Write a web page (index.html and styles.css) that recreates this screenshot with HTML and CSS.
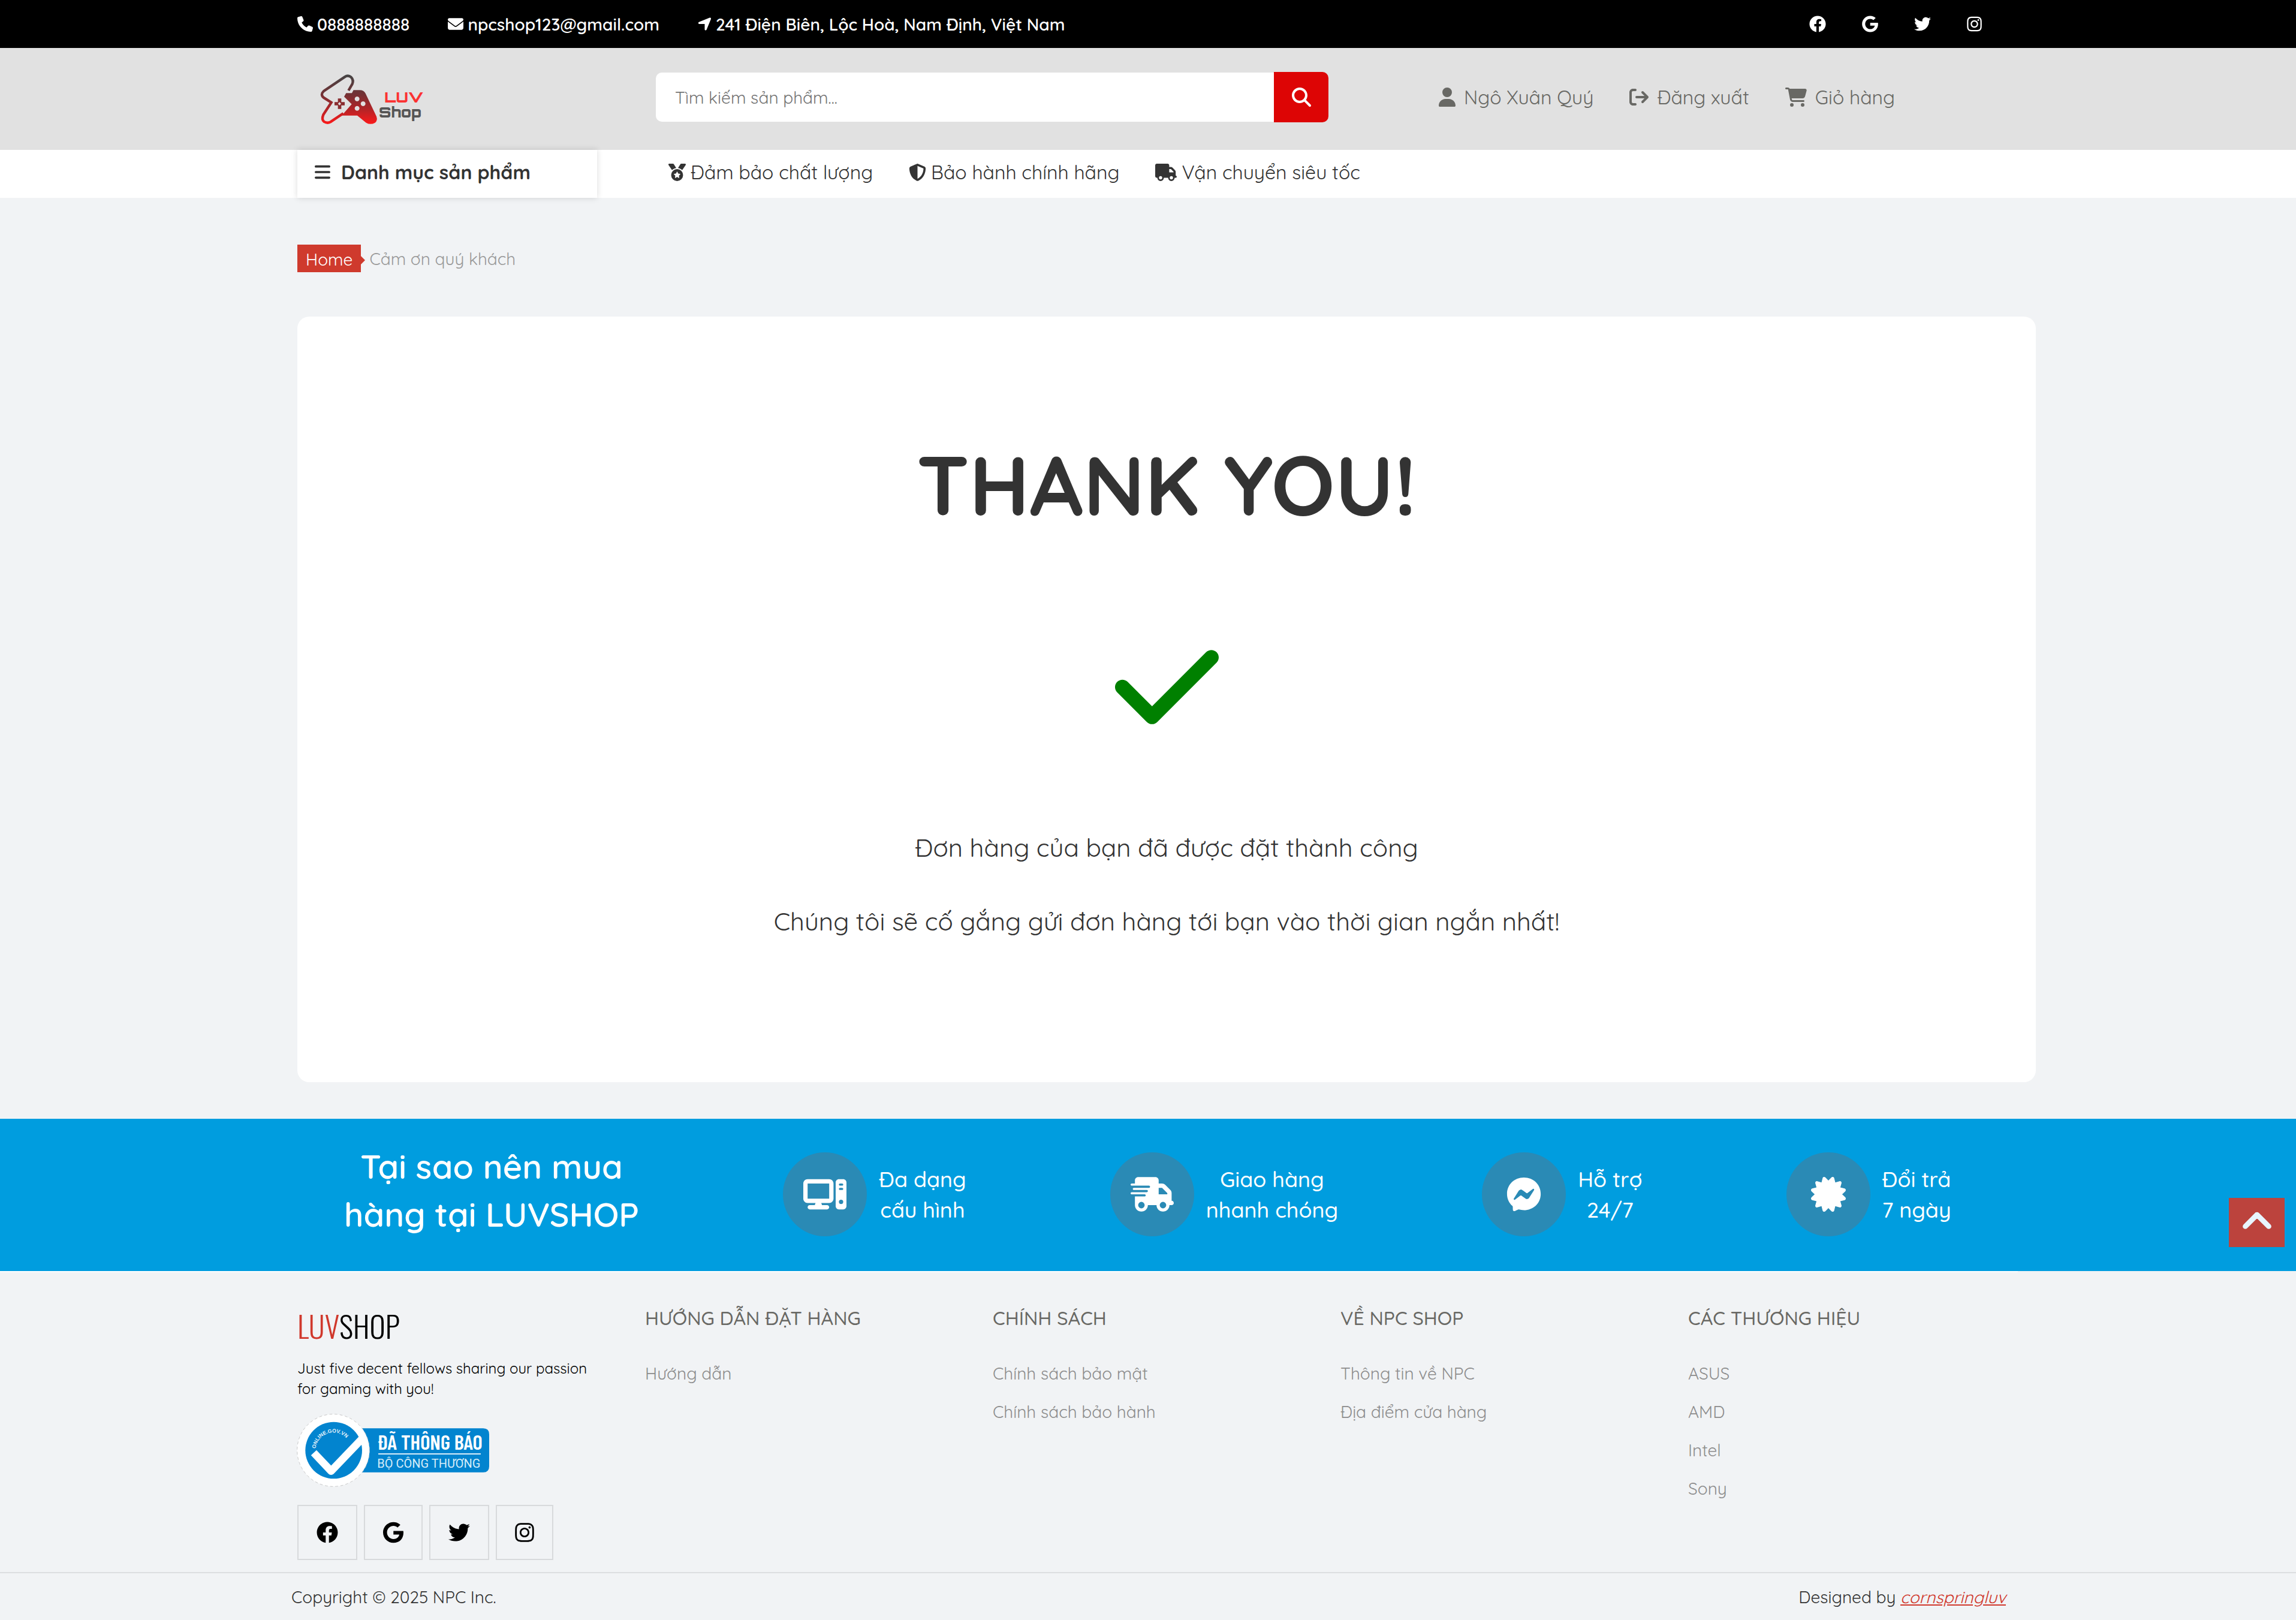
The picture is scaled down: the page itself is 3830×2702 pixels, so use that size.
FILE: index.html
```html
<!DOCTYPE html>
<html lang="vi">
<head>
<meta charset="utf-8">
<meta name="viewport" content="width=device-width, initial-scale=1">
<title>LUVSHOP - Cảm ơn quý khách</title>
<link rel="stylesheet" href="styles.css">
</head>
<body>
<svg class="sprite" aria-hidden="true">
  <symbol id="i-facebook" viewBox="0 0 512 512"><path d="M504 256C504 119 393 8 256 8S8 119 8 256c0 123.78 90.69 226.38 209.25 245V327.69h-63V256h63v-54.64c0-62.15 37-96.48 93.67-96.48 27.14 0 55.52 4.84 55.52 4.84v61h-31.28c-30.8 0-40.41 19.12-40.41 38.73V256h68.78l-11 71.69h-57.78V501C413.31 482.38 504 379.78 504 256z"/></symbol>
  <symbol id="i-google" viewBox="0 0 488 512"><path d="M488 261.8C488 403.3 391.1 504 248 504 110.8 504 0 393.2 0 256S110.8 8 248 8c66.8 0 123 24.5 166.3 64.9l-67.5 64.9C258.5 52.6 94.3 116.6 94.3 256c0 86.5 69.1 156.6 153.7 156.6 98.2 0 135-70.4 140.8-106.9H248v-85.3h236.1c2.3 12.7 3.9 24.9 3.9 41.4z"/></symbol>
  <symbol id="i-twitter" viewBox="0 0 512 512"><path d="M459.37 151.716c.325 4.548.325 9.097.325 13.645 0 138.72-105.583 298.558-298.558 298.558-59.452 0-114.68-17.219-161.137-47.106 8.447.974 16.568 1.299 25.34 1.299 49.055 0 94.213-16.568 130.274-44.832-46.132-.975-84.792-31.188-98.112-72.772 6.498.974 12.995 1.624 19.818 1.624 9.421 0 18.843-1.3 27.614-3.573-48.081-9.747-84.143-51.98-84.143-102.985v-1.299c13.969 7.797 30.214 12.67 47.431 13.319-28.264-18.843-46.781-51.005-46.781-87.391 0-19.492 5.197-37.36 14.294-52.954 51.655 63.675 129.3 105.258 216.365 109.807-1.624-7.797-2.599-15.918-2.599-24.04 0-57.828 46.782-104.934 104.934-104.934 30.213 0 57.502 12.67 76.67 33.137 23.715-4.548 46.456-13.32 66.599-25.34-7.798 24.366-24.366 44.833-46.132 57.827 21.117-2.273 41.584-8.122 60.426-16.243-14.292 20.791-32.161 39.308-52.628 54.253z"/></symbol>
  <symbol id="i-instagram" viewBox="0 0 448 512"><path d="M224.1 141c-63.6 0-114.9 51.3-114.9 114.9s51.3 114.9 114.9 114.9S339 319.5 339 255.9 287.7 141 224.1 141zm0 189.6c-41.1 0-74.7-33.5-74.7-74.7s33.5-74.7 74.7-74.7 74.7 33.5 74.7 74.7-33.6 74.7-74.7 74.7zm146.4-194.3c0 14.9-12 26.8-26.8 26.8-14.9 0-26.8-12-26.8-26.8s12-26.8 26.8-26.8 26.8 12 26.8 26.8zm76.1 27.2c-1.7-35.9-9.9-67.7-36.2-93.9-26.2-26.2-58-34.4-93.9-36.2-37-2.1-147.9-2.1-184.9 0-35.8 1.7-67.6 9.9-93.9 36.1s-34.4 58-36.2 93.9c-2.1 37-2.1 147.9 0 184.9 1.7 35.9 9.9 67.7 36.2 93.9s58 34.4 93.9 36.2c37 2.1 147.9 2.1 184.9 0 35.9-1.7 67.7-9.9 93.9-36.2 26.2-26.2 34.4-58 36.2-93.9 2.1-37 2.1-147.8 0-184.8zM398.8 388c-7.8 19.6-22.9 34.7-42.6 42.6-29.5 11.7-99.5 9-132.1 9s-102.7 2.6-132.1-9c-19.6-7.8-34.7-22.9-42.6-42.6-11.7-29.5-9-99.5-9-132.1s-2.6-102.7 9-132.1c7.8-19.6 22.9-34.7 42.6-42.6 29.5-11.7 99.5-9 132.1-9s102.7-2.6 132.1 9c19.6 7.8 34.7 22.9 42.6 42.6 11.7 29.5 9 99.5 9 132.1s2.7 102.7-9 132.1z"/></symbol>
</svg>

<div class="topbar">
  <div class="container topbar-row">
    <ul class="contacts">
      <li><svg class="icon w26" viewBox="0 0 512 512"><path d="M164.9 24.6c-7.7-18.6-28-28.5-47.4-23.2l-88 24C12.1 30.2 0 46 0 64C0 311.4 200.6 512 448 512c18 0 33.8-12.1 38.6-29.5l24-88c5.3-19.4-4.6-39.7-23.2-47.4l-96-40c-16.3-6.8-35.2-2.1-46.3 11.6L304.7 368C234.3 334.7 177.3 277.7 144 207.3L193.3 167c13.7-11.2 18.4-30 11.6-46.3l-40-96z"/></svg>0888888888</li>
      <li><svg class="icon w26" viewBox="0 0 512 512"><path d="M48 64C21.5 64 0 85.5 0 112c0 15.1 7.1 29.3 19.2 38.4L236.8 313.6c11.4 8.5 27 8.5 38.4 0L492.8 150.4c12.1-9.1 19.2-23.3 19.2-38.4c0-26.5-21.5-48-48-48H48zM0 176V384c0 35.3 28.7 64 64 64H448c35.3 0 64-28.7 64-64V176L294.4 339.2c-22.8 17.1-54 17.1-76.8 0L0 176z"/></svg>npcshop123@gmail.com</li>
      <li><svg class="icon w23" viewBox="0 0 448 512"><path d="M429.6 92.1c4.9-11.9 2.1-25.6-7-34.7s-22.8-11.9-34.7-7l-352 144c-14.2 5.8-22.2 20.8-19.3 35.8s16.1 25.8 31.4 25.8H224V432c0 15.3 10.8 28.4 25.8 31.4s30-5.1 35.8-19.3l144-352z"/></svg>241 Điện Biên, Lộc Hoà, Nam Định, Việt Nam</li>
    </ul>
    <div class="topbar-social">
      <a href="#" aria-label="Facebook"><svg class="icon w28"><use href="#i-facebook"/></svg></a>
      <a href="#" aria-label="Google"><svg class="icon w27"><use href="#i-google"/></svg></a>
      <a href="#" aria-label="Twitter"><svg class="icon w28"><use href="#i-twitter"/></svg></a>
      <a href="#" aria-label="Instagram"><svg class="icon w25"><use href="#i-instagram"/></svg></a>
    </div>
  </div>
</div>

<header class="header">
  <div class="container header-row">
    <a class="logo" href="#" aria-label="LUV Shop">
      <svg viewBox="0 -9 630 330" width="210" height="110">
        <defs><linearGradient id="pad" gradientUnits="userSpaceOnUse" x1="0" y1="45" x2="0" y2="290"><stop offset="0" stop-color="#444"/><stop offset=".4" stop-color="#743134"/><stop offset=".7" stop-color="#b32427"/><stop offset="1" stop-color="#fb1a1a"/></linearGradient></defs>
        <path d="M184 123L203 90Q211 70 197 56Q182 44 165 55L60 126Q42 143 59 158L98 183L58 244Q48 268 62 279Q78 289 94 280L158 237" fill="none" stroke="url(#pad)" stroke-width="13"/>
        <path fill="url(#pad)" fill-rule="evenodd" d="M172 136H201L209 121H240Q260 121 269 137L324 253Q331 274 317 284Q294 297 272 284L228 248H150L200 191L162 154ZM227 153a12 12 0 1 0 .1 0zM257 177a12 12 0 1 0 .1 0zM227 200a12 12 0 1 0 .1 0z"/>
        <path fill="#8a2c2f" fill-rule="evenodd" d="M131 163h17v18h17v16h-17v18h-17v-18h-17v-16h17zM139 181l-8 8 8 8 8-8z"/>
        <text class="logo-luv" x="364" y="184">LUV</text>
        <text class="logo-shop" x="336" y="257">Shop</text>
      </svg>
    </a>
    <form class="search" role="search" onsubmit="return false">
      <input class="search-input" type="search" placeholder="Tìm kiếm sản phẩm..." aria-label="Tìm kiếm sản phẩm">
      <button class="search-btn" type="submit" aria-label="Tìm kiếm"><svg class="icon w32" viewBox="0 0 512 512"><path d="M416 208c0 45.9-14.9 88.3-40 122.7L502.6 457.4c12.5 12.5 12.5 32.8 0 45.3s-32.8 12.5-45.3 0L330.7 376c-34.4 25.2-76.8 40-122.7 40C93.1 416 0 322.9 0 208S93.1 0 208 0S416 93.1 416 208zM208 352a144 144 0 1 0 0-288 144 144 0 1 0 0 288z"/></svg></button>
    </form>
    <nav class="account">
      <a href="#"><svg class="icon w28 h32" viewBox="0 0 448 512"><path d="M224 256A128 128 0 1 0 224 0a128 128 0 1 0 0 256zm-45.7 48C79.8 304 0 383.8 0 482.3C0 498.7 13.3 512 29.7 512H418.3c16.4 0 29.7-13.3 29.7-29.7C448 383.8 368.2 304 269.7 304H178.3z"/></svg>Ngô Xuân Quý</a>
      <a href="#"><svg class="icon w32" viewBox="0 0 512 512"><path d="M502.6 278.6c12.5-12.5 12.5-32.8 0-45.3l-128-128c-12.5-12.5-32.8-12.5-45.3 0s-12.5 32.8 0 45.3L402.7 224 192 224c-17.7 0-32 14.3-32 32s14.3 32 32 32l210.7 0-73.4 73.4c-12.5 12.5-12.5 32.8 0 45.3s32.8 12.5 45.3 0l128-128zM160 96c17.7 0 32-14.3 32-32s-14.3-32-32-32L96 32C43 32 0 75 0 128L0 384c0 53 43 96 96 96l64 0c17.7 0 32-14.3 32-32s-14.3-32-32-32l-64 0c-17.7 0-32-14.3-32-32l0-256c0-17.7 14.3-32 32-32l64 0z"/></svg>Đăng xuất</a>
      <a href="#"><svg class="icon w36 h32" viewBox="0 0 576 512"><path d="M0 24C0 10.7 10.7 0 24 0H69.5c22 0 41.5 12.8 50.6 32h411c26.3 0 45.5 25 38.6 50.4l-41 152.3c-8.5 31.4-37 53.3-69.5 53.3H170.7l5.4 28.5c2.2 11.3 12.1 19.5 23.6 19.5H488c13.3 0 24 10.7 24 24s-10.7 24-24 24H199.7c-34.6 0-64.3-24.6-70.7-58.5L77.4 54.5c-.7-3.8-4-6.5-7.9-6.5H24C10.7 48 0 37.3 0 24zM128 464a48 48 0 1 1 96 0 48 48 0 1 1 -96 0zm336-48a48 48 0 1 1 0 96 48 48 0 1 1 0-96z"/></svg>Giỏ hàng</a>
    </nav>
  </div>
</header>

<div class="navbar">
  <div class="container navbar-row">
    <button class="categories" type="button"><svg class="icon w26 h30" viewBox="0 0 448 512"><path d="M0 96C0 78.3 14.3 64 32 64H416c17.7 0 32 14.3 32 32s-14.3 32-32 32H32C14.3 128 0 113.7 0 96zM0 256c0-17.7 14.3-32 32-32H416c17.7 0 32 14.3 32 32s-14.3 32-32 32H32c-17.7 0-32-14.3-32-32zM448 416c0 17.7-14.3 32-32 32H32c-17.7 0-32-14.3-32-32s14.3-32 32-32H416c17.7 0 32 14.3 32 32z"/></svg>Danh mục sản phẩm</button>
    <ul class="promises">
      <li><svg class="icon w29" viewBox="0 0 512 512"><path d="M4.1 38.2C1.4 34.2 0 29.4 0 24.6C0 11 11 0 24.6 0H133.9c11.2 0 21.7 5.9 27.4 15.5l68.5 114.1c-48.2 6.1-91.3 28.6-123.4 61.9L4.1 38.2zm503.7 0L405.6 191.5c-32.1-33.3-75.2-55.8-123.4-61.9L350.7 15.5C356.5 5.9 366.9 0 378.1 0H487.4C501 0 512 11 512 24.6c0 4.8-1.4 9.6-4.1 13.6zM80 336a176 176 0 1 1 352 0A176 176 0 1 1 80 336zm184.4-94.9c-3.4-7-13.3-7-16.8 0l-22.4 45.4c-1.4 2.8-4 4.7-7 5.1L168 298.9c-7.7 1.1-10.7 10.5-5.2 16l36.3 35.4c2.2 2.2 3.2 5.2 2.7 8.3l-8.6 49.9c-1.3 7.6 6.7 13.5 13.6 9.9l44.8-23.6c2.7-1.4 6-1.4 8.7 0l44.8 23.6c6.9 3.6 14.9-2.2 13.6-9.9l-8.6-49.9c-.5-3 .5-6.1 2.7-8.3l36.3-35.4c5.6-5.4 2.5-14.8-5.2-16l-50.1-7.3c-3-.4-5.7-2.4-7-5.1l-22.4-45.4z"/></svg>Đảm bảo chất lượng</li>
      <li><svg class="icon w29" viewBox="0 0 512 512"><path d="M256 0c4.6 0 9.2 1 13.4 2.9L457.7 82.8c22 9.3 38.4 31 38.3 57.2c-.5 99.2-41.3 280.7-213.6 363.2c-16.7 8-36.1 8-52.8 0C57.3 420.7 16.5 239.2 16 140c-.1-26.2 16.3-47.9 38.3-57.2L242.7 2.9C246.8 1 251.4 0 256 0zm0 66.8V444.8C394 378 431.1 230.1 432 141.4L256 66.8l0 0z"/></svg>Bảo hành chính hãng</li>
      <li><svg class="icon w36 h29" viewBox="0 0 640 512"><path d="M48 0C21.5 0 0 21.5 0 48V368c0 26.5 21.5 48 48 48H64c0 53 43 96 96 96s96-43 96-96H384c0 53 43 96 96 96s96-43 96-96h32c17.7 0 32-14.3 32-32s-14.3-32-32-32V288 256 237.3c0-17-6.7-33.3-18.7-45.3L512 114.7c-12-12-28.3-18.7-45.3-18.7H416V48c0-26.5-21.5-48-48-48H48zM416 160h50.7L544 237.3V256H416V160zM112 416a48 48 0 1 1 96 0 48 48 0 1 1 -96 0zm368-48a48 48 0 1 1 0 96 48 48 0 1 1 0-96z"/></svg>Vận chuyển siêu tốc</li>
    </ul>
  </div>
</div>

<main class="container main">
  <nav class="breadcrumb" aria-label="Breadcrumb">
    <a class="crumb-home" href="#">Home</a>
    <span>Cảm ơn quý khách</span>
  </nav>
  <section class="card">
    <h1>THANK YOU!</h1>
    <svg class="check" viewBox="0 0 448 512"><path d="M438.6 105.4c12.5 12.5 12.5 32.8 0 45.3l-256 256c-12.5 12.5-32.8 12.5-45.3 0l-128-128c-12.5-12.5-12.5-32.8 0-45.3s32.8-12.5 45.3 0L160 338.7 393.4 105.4c12.5-12.5 32.8-12.5 45.3 0z"/></svg>
    <p>Đơn hàng của bạn đã được đặt thành công</p>
    <p>Chúng tôi sẽ cố gắng gửi đơn hàng tới bạn vào thời gian ngắn nhất!</p>
  </section>
</main>

<section class="why">
  <div class="container why-row">
    <h2>Tại sao nên mua<br>hàng tại LUVSHOP</h2>
    <div class="reason">
      <span class="disc"><svg class="icon w72" viewBox="0 0 640 512"><path fill-rule="evenodd" d="M384 96V320H64L64 96H384zM64 32C28.7 32 0 60.7 0 96V320c0 35.3 28.7 64 64 64H181.3l-10.7 32H96c-17.7 0-32 14.3-32 32s14.3 32 32 32H352c17.7 0 32-14.3 32-32s-14.3-32-32-32H277.3l-10.7-32H384c35.3 0 64-28.7 64-64V96c0-35.3-28.7-64-64-64H64zm464 0c-26.5 0-48 21.5-48 48V432c0 26.5 21.5 48 48 48h64c26.5 0 48-21.5 48-48V80c0-26.5-21.5-48-48-48H528zm16 64h32c8.8 0 16 7.2 16 16s-7.2 16-16 16H544c-8.8 0-16-7.2-16-16s7.2-16 16-16zm-16 80c0-8.8 7.2-16 16-16h32c8.8 0 16 7.2 16 16s-7.2 16-16 16H544c-8.8 0-16-7.2-16-16zm32 160a32 32 0 1 1 0 64 32 32 0 1 1 0-64z"/></svg></span>
      <p>Đa dạng<br>cấu hình</p>
    </div>
    <div class="reason">
      <span class="disc"><svg class="icon w72" viewBox="0 0 640 512"><path d="M112 0C85.5 0 64 21.5 64 48V96H16c-8.8 0-16 7.2-16 16s7.2 16 16 16H64 272c8.8 0 16 7.2 16 16s-7.2 16-16 16H64 48c-8.8 0-16 7.2-16 16s7.2 16 16 16H64 240c8.8 0 16 7.2 16 16s-7.2 16-16 16H64 16c-8.8 0-16 7.2-16 16s7.2 16 16 16H64 208c8.8 0 16 7.2 16 16s-7.2 16-16 16H64V416c0 53 43 96 96 96s96-43 96-96H384c0 53 43 96 96 96s96-43 96-96h32c17.7 0 32-14.3 32-32s-14.3-32-32-32V288 256 237.3c0-17-6.7-33.3-18.7-45.3L512 114.7c-12-12-28.3-18.7-45.3-18.7H416V48c0-26.5-21.5-48-48-48H112zM544 237.3V256H416V160h50.7L544 237.3zM160 368a48 48 0 1 1 0 96 48 48 0 1 1 0-96zm272 48a48 48 0 1 1 96 0 48 48 0 1 1 -96 0z"/></svg></span>
      <p>Giao hàng<br>nhanh chóng</p>
    </div>
    <div class="reason">
      <span class="disc"><svg class="icon w58" viewBox="0 0 512 512"><path d="M256.55 8C116.52 8 8 110.34 8 248.57c0 72.3 29.71 134.78 78.07 177.94 8.35 7.51 6.63 11.86 8.05 58.23A19.92 19.92 0 0 0 122 502.31c52.91-23.3 53.59-25.14 62.56-22.7C337.85 521.8 504 423.7 504 248.57 504 110.34 396.59 8 256.55 8zm149.24 185.13l-73 115.57a37.37 37.37 0 0 1-53.91 9.93l-58.08-43.47a15 15 0 0 0-18 0l-78.37 59.44c-10.46 7.93-24.16-4.6-17.11-15.67l73-115.57a37.36 37.36 0 0 1 53.91-9.93l58.06 43.46a15 15 0 0 0 18 0l78.41-59.38c10.44-7.98 24.14 4.54 17.09 15.62z"/></svg></span>
      <p>Hỗ trợ<br>24/7</p>
    </div>
    <div class="reason">
      <span class="disc"><svg class="icon w58" viewBox="0 0 512 512"><path d="M211 7.3C205 1 196-1.4 187.6 .8s-14.9 8.9-17.1 17.3L154.7 80.6l-62-17.5c-8.4-2.4-17.4 0-23.5 6.1s-8.5 15.1-6.1 23.5l17.5 62L18.1 170.6c-8.4 2.1-15 8.7-17.3 17.1S1 205 7.3 211l46.2 45L7.3 301C1 307-1.4 316 .8 324.4s8.9 14.9 17.3 17.1l62.5 15.8-17.5 62c-2.4 8.4 0 17.4 6.1 23.5s15.1 8.5 23.5 6.1l62-17.5 15.8 62.5c2.1 8.4 8.7 15 17.1 17.3s17.3-.2 23.4-6.4l45-46.2 45 46.2c6.1 6.2 15 8.7 23.4 6.4s14.9-8.9 17.1-17.3l15.8-62.5 62 17.5c8.4 2.4 17.4 0 23.5-6.1s8.5-15.1 6.1-23.5l-17.5-62 62.5-15.8c8.4-2.1 15-8.7 17.3-17.1s-.2-17.4-6.4-23.4l-46.2-45 46.2-45c6.2-6.1 8.7-15 6.4-23.4s-8.9-14.9-17.3-17.1l-62.5-15.8 17.5-62c2.4-8.4 0-17.4-6.1-23.5s-15.1-8.5-23.5-6.1l-62 17.5L341.4 18.1c-2.1-8.4-8.7-15-17.1-17.3S307 1 301 7.3L256 53.5 211 7.3z"/></svg></span>
      <p>Đổi trả<br>7 ngày</p>
    </div>
  </div>
  <button class="to-top" type="button" aria-label="Lên đầu trang"><svg class="icon w52" viewBox="0 0 512 512"><path stroke="currentColor" stroke-width="22" d="M233.4 105.4c12.5-12.5 32.8-12.5 45.3 0l192 192c12.5 12.5 12.5 32.8 0 45.3s-32.8 12.5-45.3 0L256 173.3 86.6 342.6c-12.5 12.5-32.8 12.5-45.3 0s-12.5-32.8 0-45.3l192-192z"/></svg></button>
</section>

<footer class="footer">
  <div class="container footer-grid">
    <div class="about">
      <a class="brand" href="#"><span>LUV</span>SHOP</a>
      <p>Just five decent fellows sharing our passion for gaming with you!</p>
      <a class="badge" href="#" aria-label="Đã thông báo Bộ Công Thương">
        <svg viewBox="30 39 960 366" width="320" height="122">
          <defs><path id="arc" d="M121 222A89 89 0 0 1 299 222"/></defs>
          <path fill="#0284cf" d="M330 112H960Q990 112 990 142V302Q990 332 960 332H330z"/>
          <circle cx="210" cy="222" r="181" fill="#fff" stroke="#c8c8c8" stroke-width="3" stroke-dasharray="14 12"/>
          <circle cx="212" cy="222" r="142" fill="#0284cf"/>
          <path d="M112 234L199 326L352 166" fill="none" stroke="#fff" stroke-width="38" stroke-linejoin="round"/>
          <text class="badge-arc"><textPath href="#arc" startOffset="8">ONLINE.GOV.VN</textPath></text>
          <text class="badge-big" x="430" y="219">ĐÃ THÔNG BÁO</text>
          <path stroke="#d8ecf8" stroke-width="6" d="M435 240H948"/>
          <text class="badge-small" x="430" y="310">BỘ CÔNG THƯƠNG</text>
        </svg>
      </a>
      <div class="social">
        <a href="#" aria-label="Facebook"><svg class="icon w36"><use href="#i-facebook"/></svg></a>
        <a href="#" aria-label="Google"><svg class="icon w34"><use href="#i-google"/></svg></a>
        <a href="#" aria-label="Twitter"><svg class="icon w36"><use href="#i-twitter"/></svg></a>
        <a href="#" aria-label="Instagram"><svg class="icon w32 h36"><use href="#i-instagram"/></svg></a>
      </div>
    </div>
    <div class="links">
      <h3>HƯỚNG DẪN ĐẶT HÀNG</h3>
      <ul><li><a href="#">Hướng dẫn</a></li></ul>
    </div>
    <div class="links">
      <h3>CHÍNH SÁCH</h3>
      <ul><li><a href="#">Chính sách bảo mật</a></li><li><a href="#">Chính sách bảo hành</a></li></ul>
    </div>
    <div class="links">
      <h3>VỀ NPC SHOP</h3>
      <ul><li><a href="#">Thông tin về NPC</a></li><li><a href="#">Địa điểm cửa hàng</a></li></ul>
    </div>
    <div class="links">
      <h3>CÁC THƯƠNG HIỆU</h3>
      <ul><li><a href="#">ASUS</a></li><li><a href="#">AMD</a></li><li><a href="#">Intel</a></li><li><a href="#">Sony</a></li></ul>
    </div>
  </div>
  <div class="legal">
    <p>Copyright © 2025 NPC Inc.</p>
    <p>Designed by <a href="#">cornspringluv</a></p>
  </div>
</footer>
</body>
</html>
```
FILE: styles.css
```css
* { box-sizing: border-box; }

body {
  margin: 0;
  background: #f1f3f5;
  color: #333;
  font-family: "Quicksand", "Open Sans", sans-serif;
  font-size: 28px;
  line-height: 35px;
}

h1, h2, h3, p, ul { margin: 0; padding: 0; }
ul { list-style: none; }
a { color: inherit; text-decoration: none; }
button { border: 0; padding: 0; font: inherit; color: inherit; cursor: pointer; }

.sprite { position: absolute; width: 0; height: 0; }
.container { margin-left: 496px; margin-right: 434px; }

.icon { display: block; flex: none; fill: currentColor; }
.w23 { width: 23px; height: 26px; }
.w25 { width: 25px; height: 28px; }
.w26 { width: 26px; height: 26px; }
.w27 { width: 27px; height: 28px; }
.w28 { width: 28px; height: 28px; }
.w29 { width: 29px; height: 29px; }
.w32 { width: 32px; height: 32px; }
.w34 { width: 34px; height: 36px; }
.w36 { width: 36px; height: 36px; }
.w52 { width: 52px; height: 52px; }
.w58 { width: 58px; height: 58px; }
.w72 { width: 72px; height: 58px; }
.h29 { height: 29px; }
.h30 { height: 30px; }
.h32 { height: 32px; }
.h36 { height: 36px; }

/* Top bar */
.topbar { background: #000; color: #fff; }
.topbar-row { display: flex; justify-content: space-between; align-items: center; min-height: 80px; padding-right: 90px; }
.contacts { display: flex; gap: 64px; font-weight: 600; }
.contacts li { display: flex; align-items: center; gap: 7px; }
.topbar-social { display: flex; gap: 60px; }

/* Header */
.header { background: #e1e1e1; padding: 40px 0 46px; }
.header-row { display: flex; align-items: center; height: 84px; }
.logo { display: block; width: 598px; padding-left: 24px; }
.logo svg { display: block; }
.logo-luv { font: 900 74px "Orbitron", "DejaVu Sans", sans-serif; fill: #fb3232; }
.logo-shop { font: 900 74px "Orbitron", "DejaVu Sans", sans-serif; fill: #555; }
.search { display: flex; align-items: center; width: 1122px; }
.search-input {
  flex: 1;
  height: 82px;
  padding: 0 32px;
  border: 0;
  border-radius: 10px 0 0 10px;
  background: #fff;
  font: inherit;
  color: #333;
}
.search-input::placeholder { color: #757575; opacity: 1; }
.search-btn { display: grid; place-items: center; width: 91px; height: 84px; border-radius: 0 10px 10px 0; background: #dd0505; color: #fff; }
.account { display: flex; gap: 60px; margin-left: 184px; font-size: 32px; line-height: 40px; color: #686864; }
.account a { display: flex; align-items: center; gap: 14px; }

/* Navigation strip */
.navbar { background: #fff; }
.navbar-row { display: flex; font-size: 32px; line-height: 40px; }
.categories {
  display: flex;
  align-items: center;
  gap: 18px;
  width: 500px;
  height: 80px;
  padding: 0 0 6px 29px;
  background: #fff;
  box-shadow: 0 0 10px rgba(0, 0, 0, .15);
  font-weight: 700;
}
.promises { display: flex; gap: 60px; margin-left: 119px; padding-bottom: 6px; }
.promises li { display: flex; align-items: center; gap: 8px; }

/* Main */
.main { padding: 78px 0 61px; }
.breadcrumb { display: flex; align-items: center; gap: 14px; color: #999; }
.crumb-home { position: relative; padding: 7px 14px 4px; background: #cf3a2d; color: #fff; }
.crumb-home::after {
  content: "";
  position: absolute;
  left: 100%;
  top: 19px;
  border: solid transparent;
  border-width: 7px 0 7px 7px;
  border-left-color: #cf3a2d;
}
.card {
  display: flex;
  flex-direction: column;
  align-items: center;
  margin-top: 74px;
  padding: 192px 0 242px;
  border-radius: 20px;
  background: #fff;
  font-size: 42px;
  line-height: 52px;
  text-align: center;
}
.card h1 { font-size: 140px; line-height: 175px; font-weight: 700; }
.check { width: 173px; height: 198px; margin: 152px 0 143px; fill: #008000; }
.card p + p { margin-top: 71px; }

/* Why us */
.why { position: relative; background: #009ddf; color: #fff; }
.why-row { display: flex; align-items: center; gap: 240px; padding: 39px 0 41px 78px; white-space: nowrap; }
.why h2 { padding-bottom: 14px; font-size: 56px; line-height: 80px; font-weight: 600; text-align: center; }
.reason { display: flex; align-items: center; gap: 20px; font-size: 36px; line-height: 51px; font-weight: 500; text-align: center; }
.disc { display: grid; place-items: center; width: 140px; height: 140px; border-radius: 50%; background: #2a8ab5; }
.to-top { position: absolute; right: 19px; bottom: 40px; display: grid; place-items: center; width: 93px; height: 82px; background: #bc433d; color: #e8f5ff; }

/* Footer */
.footer::before { content: ""; display: block; width: calc(100% - 464px); height: 2px; background: #fff; }
.footer-grid { display: grid; grid-template-columns: repeat(5, 1fr); padding: 56px 0 20px; }
.brand { display: block; font-family: "Oswald", "Open Sans", sans-serif; font-weight: 300; font-size: 50px; line-height: 64px; color: #000; }
.brand span { color: #d0382c; }
.about p { max-width: 500px; margin-top: 23px; font-size: 24px; line-height: 34px; color: #000; }
.badge { display: block; margin-top: 25px; }
.badge svg { display: block; overflow: visible; }
.badge-arc { font: 700 26px "Liberation Sans", sans-serif; fill: #e6f3fb; }
.badge-big { font: 600 104px "Barlow Condensed", "Roboto Condensed", "Roboto", sans-serif; fill: #fff; }
.badge-small { font: 400 60px "Roboto", sans-serif; fill: #d8ecf8; }
.social { display: flex; gap: 11px; margin-top: 30px; color: #000; }
.social a { display: flex; align-items: center; height: 92px; padding: 0 30px; border: 2px solid #d8dadc; }
.links h3 { font-size: 32px; line-height: 40px; font-weight: 500; color: #686864; }
.links ul { display: grid; gap: 29px; margin-top: 55px; color: #8d8d8d; }
.legal { display: flex; justify-content: space-between; padding: 22px 484px 20px 486px; border-top: 2px solid #dcdee0; }
.legal a { color: #d0382c; font-style: italic; text-decoration: underline; }
```
